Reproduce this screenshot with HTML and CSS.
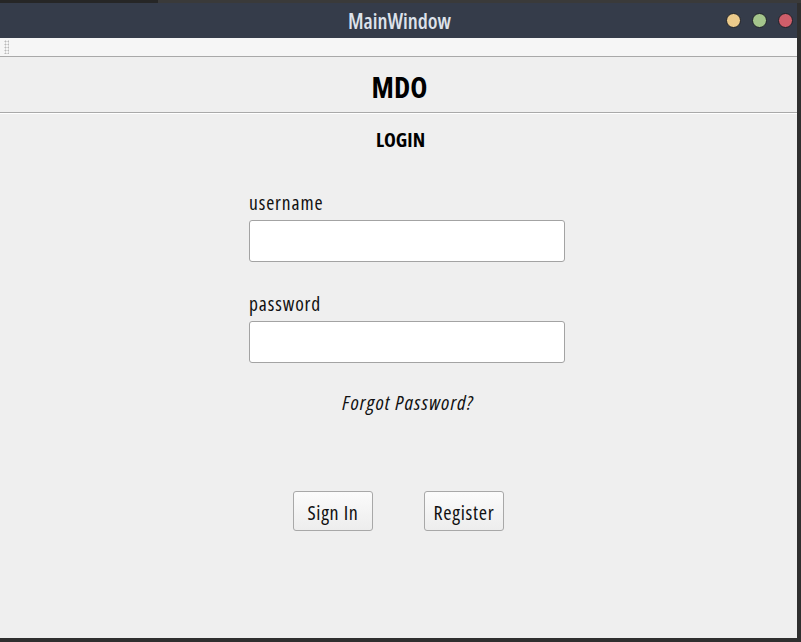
FILE: index.html
```html
<!DOCTYPE html>
<html>
<head>
<meta charset="utf-8">
<link rel="stylesheet" href="styles.css">
</head>
<body>
<div class="desktop">
  <div class="topstrip"><div class="tab"></div></div>
  <div class="window">
    <div class="titlebar">
      <span class="title">MainWindow</span>
      <div class="controls">
        <span class="dot dot-min"></span>
        <span class="dot dot-max"></span>
        <span class="dot dot-close"></span>
      </div>
    </div>
    <div class="toolbar"><span class="grip"></span></div>
    <div class="header"><h1 class="brand">MDO</h1></div>
    <div class="content">
      <h2 class="login-title">LOGIN</h2>
      <form class="form">
        <label class="label">username</label>
        <input class="field" type="text">
        <label class="label label-second">password</label>
        <input class="field" type="password">
        <a class="forgot">Forgot Password?</a>
      </form>
      <div class="actions">
        <button type="button" class="btn">Sign In</button>
        <button type="button" class="btn">Register</button>
      </div>
    </div>
  </div>
</div>
</body>
</html>
```
FILE: styles.css
```css
* { box-sizing: border-box; }
html, body { margin: 0; padding: 0; }
body {
  width: 801px;
  height: 642px;
  overflow: hidden;
  background: #2f2f2f;
  font-family: "Open Sans", "DejaVu Sans Condensed", sans-serif;
  font-stretch: 75%;
}
.desktop {
  display: flex;
  flex-direction: column;
  height: 642px;
}
.topstrip {
  height: 3px;
  background: #3a3a3a;
  display: flex;
}
.tab {
  width: 158px;
  background: #262626;
}
.window {
  flex: 1;
  display: flex;
  flex-direction: column;
  margin-right: 4px;
  margin-bottom: 4px;
  background: #efefef;
}
.titlebar {
  height: 35px;
  background: #353c4a;
  display: flex;
  align-items: center;
  justify-content: center;
  position: relative;
}
.title {
  color: #dde2ea;
  font-size: 21px;
  font-weight: 600;
  padding-left: 2px;
}
.controls {
  position: absolute;
  right: 4px;
  top: 10px;
  display: flex;
  gap: 11px;
}
.dot {
  width: 15px;
  height: 15px;
  border-radius: 50%;
  border: 1px solid #1e2128;
}
.dot-min { background: #ebca8b; }
.dot-max { background: #a4c58c; }
.dot-close { background: #cf5e6a; }
.toolbar {
  height: 19px;
  background: #f6f6f6;
  border-bottom: 1px solid #a9a9a9;
  display: flex;
  align-items: center;
  padding-left: 4px;
}
.grip {
  width: 5px;
  height: 14px;
  background-image: radial-gradient(circle, #b9b9b9 0.8px, transparent 1.2px);
  background-size: 3px 3px;
}
.header {
  height: 56px;
  border-bottom: 1px solid #a9a9a9;
  display: flex;
  align-items: center;
  justify-content: center;
}
.brand {
  margin: 0;
  font-size: 29px;
  font-weight: bold;
  color: #000;
  padding-top: 3px;
  padding-left: 2px;
}
.content {
  flex: 1;
  border-top: 1px solid #ffffff;
  display: flex;
  flex-direction: column;
  align-items: center;
}
.login-title {
  margin: 12px 0 0;
  font-size: 20px;
  font-weight: bold;
  color: #000;
  padding-left: 4px;
}
.form {
  display: flex;
  flex-direction: column;
  width: 316px;
  margin-top: 38px;
  margin-left: 17px;
}
.label {
  font-size: 19.5px;
  letter-spacing: 0.9px;
  color: #111;
  line-height: 22px;
  padding-top: 1px;
  margin-bottom: 6px;
}
.label-second { margin-top: 30px; }
.field {
  height: 42px;
  width: 316px;
  border: 1px solid #a3a3a3;
  border-radius: 3px;
  background: #fff;
  margin: 0;
}
.forgot {
  align-self: center;
  margin-top: 25px;
  margin-left: 2px;
  font-size: 20.5px;
  letter-spacing: 1.1px;
  font-style: italic;
  color: #111;
}
.actions {
  display: flex;
  justify-content: center;
  gap: 51px;
  margin-top: 75px;
}
.btn {
  width: 80px;
  height: 40px;
  border: 1px solid #a8a8a8;
  border-radius: 3px;
  background: linear-gradient(#fbfbfb, #ededed);
  font-family: inherit;
  font-stretch: inherit;
  font-size: 20px;
  letter-spacing: 0.7px;
  color: #111;
  padding: 2px 0 0;
}
```
